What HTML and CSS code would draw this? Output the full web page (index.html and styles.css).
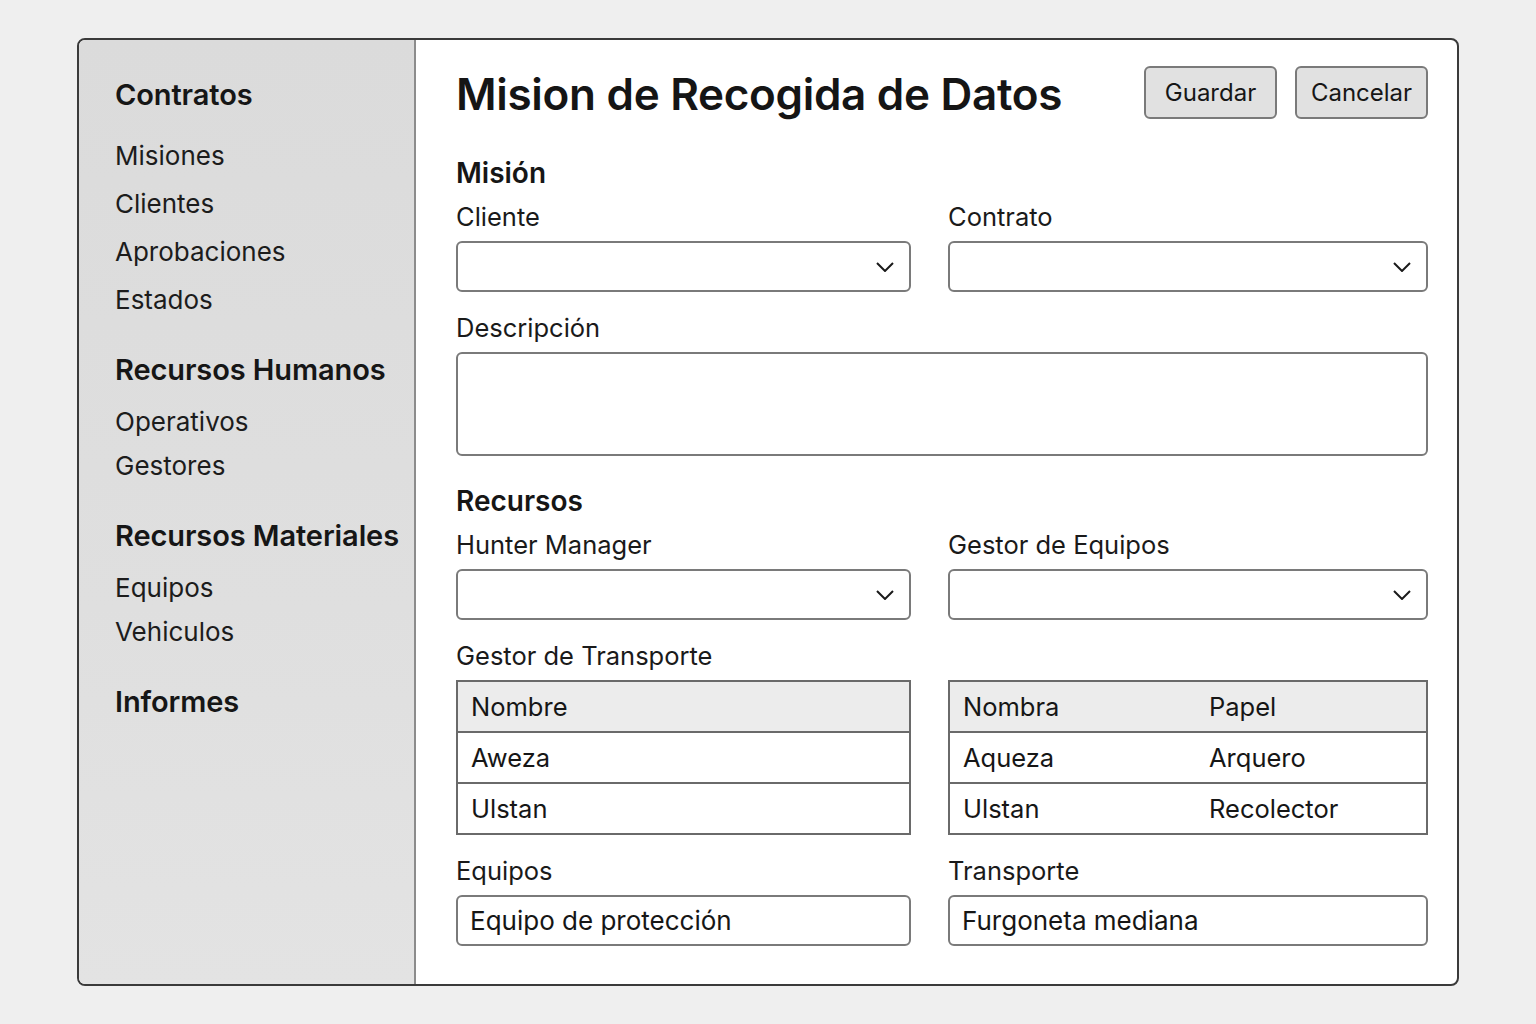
FILE: index.html
```html
<!DOCTYPE html>
<html lang="es">
<head>
<meta charset="utf-8">
<title>Mision de Recogida de Datos</title>
<link rel="stylesheet" href="styles.css">
</head>
<body>
<div class="frame">
  <aside class="sidebar">
    <div class="group first">
      <div class="group-title">Contratos</div>
      <div class="item">Misiones</div>
      <div class="item">Clientes</div>
      <div class="item">Aprobaciones</div>
      <div class="item">Estados</div>
    </div>
    <div class="group">
      <div class="group-title">Recursos Humanos</div>
      <div class="item">Operativos</div>
      <div class="item">Gestores</div>
    </div>
    <div class="group">
      <div class="group-title">Recursos Materiales</div>
      <div class="item">Equipos</div>
      <div class="item">Vehiculos</div>
    </div>
    <div class="group">
      <div class="group-title">Informes</div>
    </div>
  </aside>
  <main class="main">
    <header class="header">
      <h1 class="title">Mision de Recogida de Datos</h1>
      <div class="actions">
        <button class="btn">Guardar</button>
        <button class="btn">Cancelar</button>
      </div>
    </header>

    <h2 class="section">Misión</h2>
    <div class="grid">
      <div class="field">
        <div class="label">Cliente</div>
        <div class="select"><svg class="chev" viewBox="0 0 18 10" width="18" height="10"><polyline points="1,1 9,9 17,1"/></svg></div>
      </div>
      <div class="field">
        <div class="label">Contrato</div>
        <div class="select"><svg class="chev" viewBox="0 0 18 10" width="18" height="10"><polyline points="1,1 9,9 17,1"/></svg></div>
      </div>
      <div class="field span">
        <div class="label">Descripción</div>
        <div class="textarea"></div>
      </div>
    </div>

    <h2 class="section recursos">Recursos</h2>
    <div class="grid">
      <div class="field">
        <div class="label">Hunter Manager</div>
        <div class="select"><svg class="chev" viewBox="0 0 18 10" width="18" height="10"><polyline points="1,1 9,9 17,1"/></svg></div>
      </div>
      <div class="field">
        <div class="label">Gestor de Equipos</div>
        <div class="select"><svg class="chev" viewBox="0 0 18 10" width="18" height="10"><polyline points="1,1 9,9 17,1"/></svg></div>
      </div>
      <div class="field">
        <div class="label">Gestor de Transporte</div>
        <table class="tbl">
          <tr class="head"><td>Nombre</td></tr>
          <tr><td>Aweza</td></tr>
          <tr><td>Ulstan</td></tr>
        </table>
      </div>
      <div class="field">
        <div class="label">&nbsp;</div>
        <table class="tbl two">
          <tr class="head"><td>Nombra</td><td>Papel</td></tr>
          <tr><td>Aqueza</td><td>Arquero</td></tr>
          <tr><td>Ulstan</td><td>Recolector</td></tr>
        </table>
      </div>
      <div class="field">
        <div class="label">Equipos</div>
        <div class="input">Equipo de protección</div>
      </div>
      <div class="field">
        <div class="label">Transporte</div>
        <div class="input">Furgoneta mediana</div>
      </div>
    </div>
  </main>
</div>
</body>
</html>
```

FILE: styles.css
```css
* { box-sizing: border-box; }
html, body { margin: 0; padding: 0; }
body {
  background: #efefef;
  font-family: Inter, "Noto Sans", "Liberation Sans", sans-serif;
  color: #161616;
  padding: 38px 77px 38px 77px;
  height: 1024px;
}
.frame {
  display: flex;
  width: 1382px;
  height: 948px;
  border: 2px solid #3a3a3a;
  border-radius: 8px;
  background: #fff;
  overflow: hidden;
}
.sidebar {
  width: 337px;
  flex: none;
  background: linear-gradient(180deg, #dbdbdb 0%, #dfdfdf 60%, #e3e3e3 100%);
  border-right: 2px solid #8c8c8c;
  padding: 37px 0 0 36px;
  display: flex;
  flex-direction: column;
  gap: 35px;
}
.group { display: flex; flex-direction: column; gap: 10px; }
.group.first { gap: 14px; }
.group-title {
  font-size: 29px;
  font-weight: 600;
  line-height: 36px;
  margin-bottom: 7px;
  letter-spacing: -0.1px;
}
.group.first .group-title { margin-bottom: 12px; }
.item {
  font-size: 26px;
  line-height: 34px;
  color: #1c1c1c;
}
.main {
  flex: 1;
  padding: 26px 30px 0 40px;
}
.header {
  display: flex;
  justify-content: space-between;
  align-items: center;
  height: 53px;
}
.title {
  margin: 0;
  font-size: 44px;
  font-weight: 600;
  letter-spacing: -0.3px;
  color: #151515;
  padding-top: 3px;
}
.actions { display: flex; gap: 18px; }
.btn {
  font-family: inherit;
  font-size: 24px;
  color: #161616;
  background: #e1e1e1;
  border: 2px solid #7a7a7a;
  border-radius: 6px;
  height: 53px;
  width: 133px;
  padding: 0;
}
.section {
  margin: 37px 0 12px 0;
  font-size: 28px;
  font-weight: 600;
  line-height: 34px;
}
.section.recursos { margin-top: 28px; }
.grid {
  display: grid;
  grid-template-columns: 455px 480px;
  column-gap: 37px;
  row-gap: 21px;
}
.field.span { grid-column: 1 / 3; }
.label {
  font-size: 25.5px;
  line-height: 30px;
  margin-bottom: 9px;
  color: #1a1a1a;
}
.select {
  height: 51px;
  border: 2px solid #7a7a7a;
  border-radius: 6px;
  display: flex;
  align-items: center;
  justify-content: flex-end;
  padding-right: 15px;
}
.chev { fill: none; stroke: #1a1a1a; stroke-width: 2; }
.textarea {
  height: 104px;
  border: 2px solid #7a7a7a;
  border-radius: 6px;
}
.tbl {
  width: 100%;
  border-collapse: collapse;
  border: 2px solid #6a6a6a;
  font-size: 25.5px;
}
.tbl td {
  height: 51px;
  padding: 0 13px;
  border-top: 2px solid #6a6a6a;
}
.tbl .head td { background: #ececec; }
.tbl.two td:first-child { width: 247px; }
.input {
  height: 51px;
  border: 2px solid #7a7a7a;
  border-radius: 6px;
  font-size: 26px;
  display: flex;
  align-items: center;
  padding-left: 12px;
}
```
